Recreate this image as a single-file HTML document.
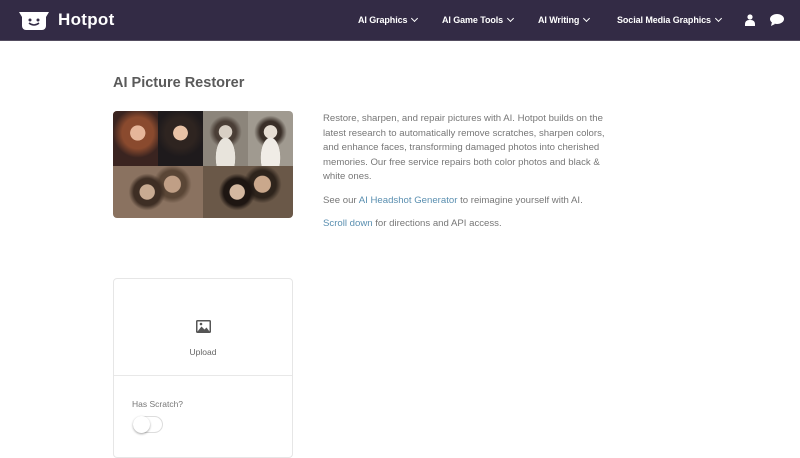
<!DOCTYPE html>
<html><head><meta charset="utf-8"><style>
*{margin:0;padding:0;box-sizing:border-box}
body{width:800px;height:449px;overflow:hidden;background:#fff;font-family:"Liberation Sans",sans-serif;position:relative}
.nav{position:absolute;left:0;top:0;width:800px;height:41px;background:#332b45;border-bottom:1px solid #544d60}
.logo{position:absolute;left:18px;top:11px}
.brand{position:absolute;left:58px;top:10px;color:#fff;font-weight:bold;font-size:17px;letter-spacing:.3px}
.mi{position:absolute;top:15px;color:#fff;font-weight:bold;font-size:9px;letter-spacing:-.1px}
.mi i{display:inline-block;width:5px;height:5px;border-right:1.3px solid #fff;border-bottom:1.3px solid #fff;transform:rotate(45deg);margin-left:5px;position:relative;top:-2px}
h1{position:absolute;left:113px;top:75px;font-size:14.5px;color:#5a5a5a;font-weight:bold}
.pics{position:absolute;left:113px;top:111px;width:180px;height:107px;border-radius:4px;overflow:hidden}
.p{position:absolute}
.txt{position:absolute;left:323px;top:112px;width:287px;font-size:9.6px;line-height:14.5px;color:#777}
.txt p{margin-bottom:9px}
.txt a{color:#5a8fb0;text-decoration:none}
.card{position:absolute;left:113px;top:278px;width:180px;height:180px;border:1px solid #e6e6e6;border-radius:4px}
.card .sep{position:absolute;left:0;top:96px;width:178px;height:1px;background:#e8e8e8}
.up{position:absolute;left:0;top:68px;width:178px;text-align:center;font-size:8.5px;color:#666}
.hs{position:absolute;left:18px;top:120px;font-size:8.5px;color:#777}
.tog{position:absolute;left:19px;top:137px;width:30px;height:17px;border:1px solid #ddd;border-radius:9px}
.tog b{position:absolute;left:-1px;top:-1px;width:17px;height:17px;border-radius:50%;background:#fff;box-shadow:0 1px 2px rgba(0,0,0,.35)}
</style></head><body>
<div class="nav">
<svg class="logo" width="32" height="20" viewBox="0 0 32 20"><path d="M1 1h30l-3 5v9a4 4 0 0 1-4 4H8a4 4 0 0 1-4-4V6z" fill="#fff"/><circle cx="12" cy="9" r="1.5" fill="#332b45"/><circle cx="20" cy="9" r="1.5" fill="#332b45"/><path d="M11 12q5 4 10 0" stroke="#332b45" stroke-width="1.5" fill="none"/></svg>
<div class="brand">Hotpot</div>
<div class="mi" style="left:358px">AI Graphics<i></i></div>
<div class="mi" style="left:442px">AI Game Tools<i></i></div>
<div class="mi" style="left:538px">AI Writing<i></i></div>
<div class="mi" style="left:617px">Social Media Graphics<i></i></div>
<svg style="position:absolute;left:745px;top:14px" width="10" height="12" viewBox="0 0 10 12"><circle cx="5" cy="3" r="2.6" fill="#fff"/><path d="M0 12v-2a4 4 0 0 1 4-4h2a4 4 0 0 1 4 4v2z" fill="#fff"/></svg>
<svg style="position:absolute;left:770px;top:14px" width="14" height="12" viewBox="0 0 14 12"><ellipse cx="7" cy="5" rx="7" ry="5" fill="#fff"/><path d="M2 8l-1 4 4-2z" fill="#fff"/></svg>
</div>
<h1>AI Picture Restorer</h1>
<div class="pics">
<div class="p" style="left:0;top:0;width:45px;height:55px;background:radial-gradient(circle at 55% 40%,#e6b69a 0 18%,#8a4a2e 19% 38%,#3a2420 60%),#c08a70"></div>
<div class="p" style="left:45px;top:0;width:45px;height:55px;background:radial-gradient(circle at 50% 40%,#e8c2a6 0 18%,#2e2420 19% 38%,#1e1a1c 60%),#9aa0a0"></div>
<div class="p" style="left:90px;top:0;width:45px;height:55px;background:radial-gradient(ellipse at 50% 85%,#e8e4dc 0 30%,transparent 31%),radial-gradient(circle at 50% 38%,#d8cfc4 0 16%,#4a3e36 17% 26%,#8c857b 40%)"></div>
<div class="p" style="left:135px;top:0;width:45px;height:55px;background:radial-gradient(ellipse at 50% 85%,#f0ece6 0 30%,transparent 31%),radial-gradient(circle at 50% 38%,#e6ddd2 0 16%,#3a2f28 17% 26%,#a09a90 40%)"></div>
<div class="p" style="left:0;top:55px;width:90px;height:52px;background:radial-gradient(circle at 38% 50%,#c8ab92 0 12%,#3e2e24 13% 22%,transparent 30%),radial-gradient(circle at 66% 35%,#c09f86 0 12%,#5a4636 13% 20%,transparent 28%),#8a7260"></div>
<div class="p" style="left:90px;top:55px;width:90px;height:52px;background:radial-gradient(circle at 38% 50%,#d4b8a0 0 12%,#1e1612 13% 22%,transparent 30%),radial-gradient(circle at 66% 35%,#caa88c 0 12%,#2e241c 13% 20%,transparent 28%),#6a5848"></div>
</div>
<div class="txt">
<p>Restore, sharpen, and repair pictures with AI. Hotpot builds on the latest research to automatically remove scratches, sharpen colors, and enhance faces, transforming damaged photos into cherished memories. Our free service repairs both color photos and black &amp; white ones.</p>
<p>See our <a>AI Headshot Generator</a> to reimagine yourself with AI.</p>
<p><a>Scroll down</a> for directions and API access.</p>
</div>
<div class="card">
<svg style="position:absolute;left:82px;top:41px" width="15" height="13" viewBox="0 0 15 13"><rect width="15" height="13" rx="1.5" fill="#555"/><rect x="1.5" y="1.5" width="12" height="10" fill="#fff"/><path d="M1.5 11.5l4-5 3 3 2-2 3 4z" fill="#555"/><circle cx="5" cy="4" r="1.3" fill="#555"/></svg>
<div class="up">Upload</div>
<div class="sep"></div>
<div class="hs">Has Scratch?</div>
<div class="tog"><b></b></div>
</div>
</body></html>
